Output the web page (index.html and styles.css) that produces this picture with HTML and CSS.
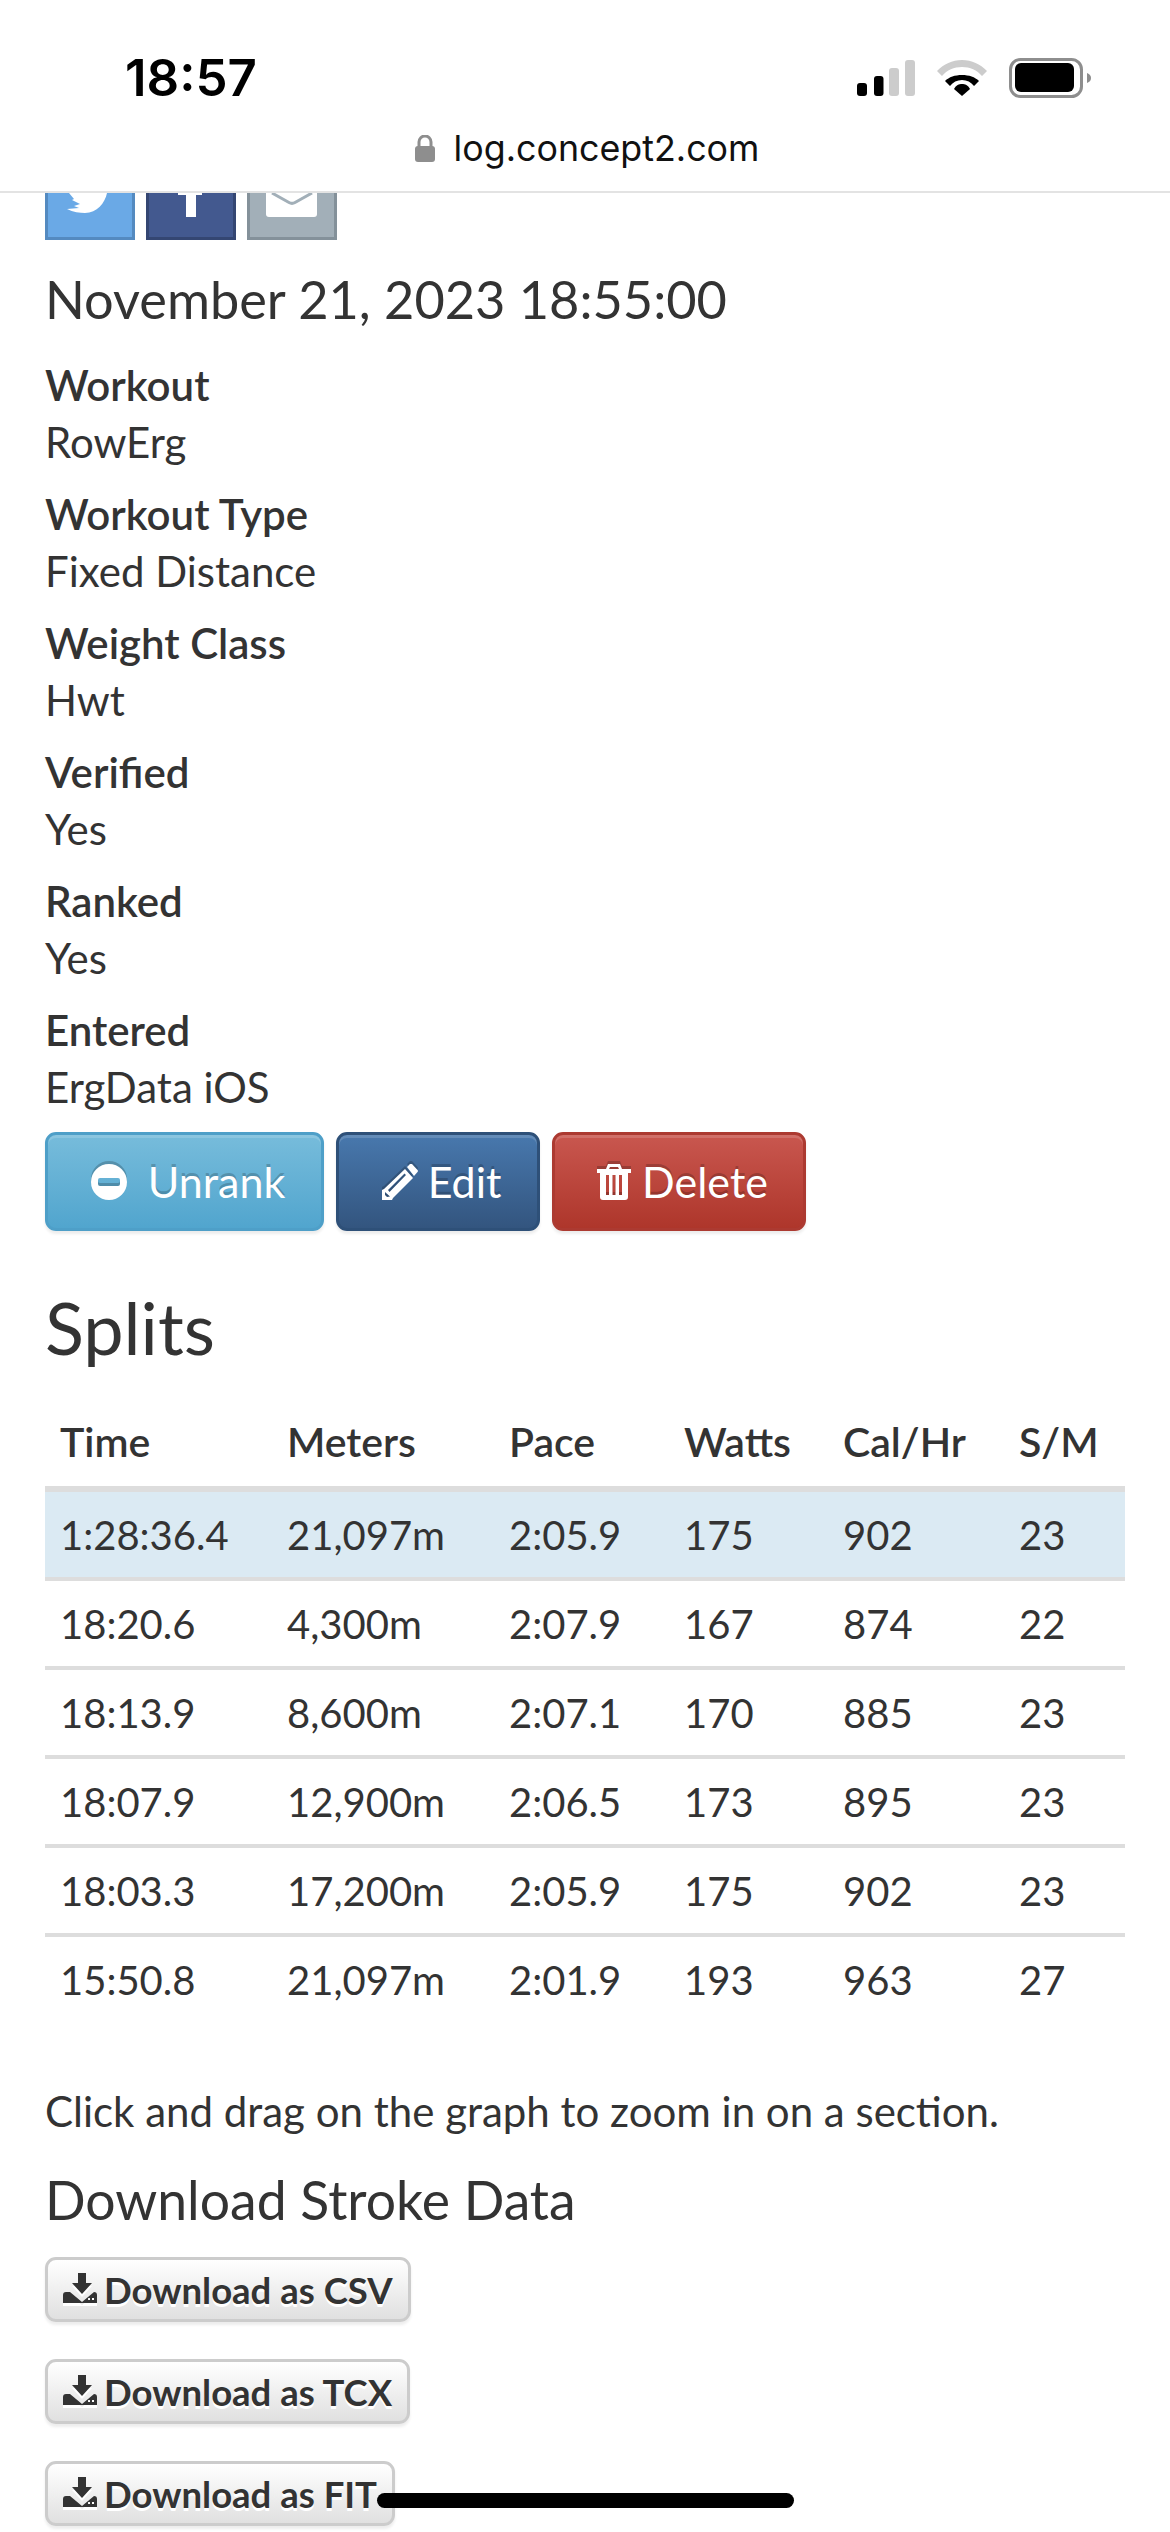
FILE: index.html
```html
<!DOCTYPE html>
<html lang="en">
<head>
<meta charset="utf-8">
<title>log.concept2.com</title>
<link rel="stylesheet" href="styles.css">
</head>
<body>
<header class="chrome">
  <div class="status">
    <span class="clock">18:57</span>
    <div class="status-icons">
      <svg class="signal" viewBox="0 0 58 36"><rect x="0" y="23" width="10" height="13" rx="3" fill="#000"/><rect x="17" y="16" width="9.500" height="20" rx="3" fill="#000"/><rect x="32" y="8" width="10" height="28" rx="3" fill="#ccc"/><rect x="48" y="0" width="10" height="36" rx="3" fill="#ccc"/></svg>
      <svg class="wifi" viewBox="0 0 50 37"><path d="M25 0C15 0 7 4 0 11l5 5c5-6 12-9 20-9s15 3 20 9l5-5C43 4 35 0 25 0z" fill="#ccc"/><path d="M25 15c-7 0-13 2-17 6l5 5c3-4 7-6 12-6s9 2 12 6l5-5c-4-4-10-6-17-6z" fill="#000"/><path d="M25 24c-3 0-6 1-8 5l8 7 8-7c-2-4-5-5-8-5z" fill="#000"/></svg>
      <svg class="battery" viewBox="0 0 82 40"><rect x="1.500" y="1.500" width="71" height="37" rx="10" fill="none" stroke="#8e8e8e" stroke-width="3"/><rect x="6" y="5" width="59" height="29" rx="6" fill="#000"/><path d="M78 15c3 1 4 3 4 5s-1 4-4 5z" fill="#8e8e8e"/></svg>
    </div>
  </div>
  <div class="address">
    <svg class="lock" viewBox="0 0 20 27"><path d="M4 12V7a6 6 0 0 1 12 0v5" fill="none" stroke="#8e8e8e" stroke-width="3"/><rect x="0" y="11" width="20" height="16" rx="3" fill="#8e8e8e"/></svg>
    <span>log.concept2.com</span>
  </div>
</header>

<main class="page">
  <div class="share">
    <a class="share-btn twitter"><svg viewBox="0 0 90 47"><path d="M24 0l5 6-2 1 8 4-6 2 5 2-12 1c6 3 13 4 18 4 12 0 20-10 22-20z" fill="#fff"/></svg></a>
    <a class="share-btn facebook"><svg viewBox="0 0 90 47"><path d="M32 0h24v2h-6v22H40V2h-8z" fill="#fff"/></svg></a>
    <a class="share-btn mail"><svg viewBox="0 0 90 47"><path d="M19 0h51v21a3 3 0 0 1-3 3H22a3 3 0 0 1-3-3z" fill="#fff"/><path d="M25 0l17 9.500a6 6 0 0 0 6 0L65 0" fill="none" stroke="#a2afb8" stroke-width="3"/></svg></a>
  </div>

  <h3 class="date">November 21, 2023 18:55:00</h3>

  <dl class="facts">
    <dt>Workout</dt><dd>RowErg</dd>
    <dt>Workout Type</dt><dd>Fixed Distance</dd>
    <dt>Weight Class</dt><dd>Hwt</dd>
    <dt>Verified</dt><dd>Yes</dd>
    <dt>Ranked</dt><dd>Yes</dd>
    <dt>Entered</dt><dd>ErgData iOS</dd>
  </dl>

  <div class="actions">
    <a class="btn btn-unrank">
      <svg class="icon-minus" viewBox="0 0 36 36"><path fill-rule="evenodd" d="M18 0a18 18 0 1 1 0 36 18 18 0 0 1 0-36zM9 14a2 2 0 0 0-2 2v4a2 2 0 0 0 2 2h18a2 2 0 0 0 2-2v-4a2 2 0 0 0-2-2z" fill="#fff"/></svg>
      <span>Unrank</span>
    </a>
    <a class="btn btn-edit">
      <svg class="icon-pencil" viewBox="0 0 36 36"><path d="M25 3l3-3a1.500 1.500 0 0 1 2 0l5.500 6a1.500 1.500 0 0 1 0 2L32 12z" fill="#fff"/><path fill-rule="evenodd" d="M23 5l8 9L11 34l-1 2H0V26l2-1zM6 26l1.500 2L24 11l-1.500-1.500zM3 28v3l2 2 3-.5z" fill="#fff"/></svg>
      <span>Edit</span>
    </a>
    <a class="btn btn-delete">
      <svg class="icon-trash" viewBox="0 0 34 36"><path fill-rule="evenodd" d="M11 0h12l2 5h9v4h-3v24a3 3 0 0 1-3 3H6a3 3 0 0 1-3-3V9H0V5h9zM13 3l-1 2h10l-1-2zM9 11v20h3V11zM15.500 11v20h3V11zM22 11v20h3V11z" fill="#fff"/></svg>
      <span>Delete</span>
    </a>
  </div>

  <h2 class="section-title">Splits</h2>

  <table class="splits">
    <thead>
      <tr><th class="c1">Time</th><th class="c2">Meters</th><th class="c3">Pace</th><th class="c4">Watts</th><th class="c5">Cal/Hr</th><th class="c6">S/M</th></tr>
    </thead>
    <tbody>
      <tr class="total"><td>1:28:36.4</td><td>21,097m</td><td>2:05.9</td><td>175</td><td>902</td><td>23</td></tr>
      <tr><td>18:20.6</td><td>4,300m</td><td>2:07.9</td><td>167</td><td>874</td><td>22</td></tr>
      <tr><td>18:13.9</td><td>8,600m</td><td>2:07.1</td><td>170</td><td>885</td><td>23</td></tr>
      <tr><td>18:07.9</td><td>12,900m</td><td>2:06.5</td><td>173</td><td>895</td><td>23</td></tr>
      <tr><td>18:03.3</td><td>17,200m</td><td>2:05.9</td><td>175</td><td>902</td><td>23</td></tr>
      <tr><td>15:50.8</td><td>21,097m</td><td>2:01.9</td><td>193</td><td>963</td><td>27</td></tr>
    </tbody>
  </table>

  <p class="hint">Click and drag on the graph to zoom in on a section.</p>
  <h3 class="download-title">Download Stroke Data</h3>

  <div class="downloads">
    <a class="dl-btn"><svg class="icon-dl" viewBox="0 0 34 30"><path fill-rule="evenodd" d="M15 0h8v10h6L19 21 9 10h6zM3 19h4l12 10 12-10h0a3 3 0 0 1 3 3v8H0v-8a3 3 0 0 1 3-3zM25 25v2h2v-2zM29 25v2h2v-2z" fill="#333"/></svg><span>Download as CSV</span></a>
    <a class="dl-btn"><svg class="icon-dl" viewBox="0 0 34 30"><path fill-rule="evenodd" d="M15 0h8v10h6L19 21 9 10h6zM3 19h4l12 10 12-10h0a3 3 0 0 1 3 3v8H0v-8a3 3 0 0 1 3-3zM25 25v2h2v-2zM29 25v2h2v-2z" fill="#333"/></svg><span>Download as TCX</span></a>
    <a class="dl-btn"><svg class="icon-dl" viewBox="0 0 34 30"><path fill-rule="evenodd" d="M15 0h8v10h6L19 21 9 10h6zM3 19h4l12 10 12-10h0a3 3 0 0 1 3 3v8H0v-8a3 3 0 0 1 3-3zM25 25v2h2v-2zM29 25v2h2v-2z" fill="#333"/></svg><span>Download as FIT</span></a>
  </div>
</main>
<div class="home-indicator"></div>
</body>
</html>
```
FILE: styles.css
```css
* { box-sizing: border-box; }
html, body { margin: 0; padding: 0; }
body {
  width: 1170px;
  height: 2532px;
  overflow: hidden;
  position: relative;
  background: #fff;
  color: #333;
  font-family: Lato, "Open Sans", sans-serif;
  font-size: 42px;
  line-height: 58px;
}
.chrome {
  height: 193px;
  background: #fff;
  border-bottom: 2px solid #e3e3e3;
  font-family: Inter, "Liberation Sans", sans-serif;
}
.status {
  height: 116px;
  padding: 53px 79px 0 125px;
  display: flex;
  justify-content: space-between;
  align-items: flex-start;
}
.clock { font-size: 51px; font-weight: 600; line-height: 50px; color: #000; }
.status-icons { display: flex; align-items: center; gap: 22px; padding-top: 5px; }
.signal { width: 58px; height: 36px; display: block; }
.wifi { width: 50px; height: 37px; display: block; }
.battery { width: 82px; height: 40px; display: block; }
.address {
  display: flex;
  justify-content: center;
  align-items: center;
  gap: 19px;
  height: 62px;
  padding: 2px 0 0 4px;
  font-size: 35.800px;
  line-height: 62px;
  color: #111;
}
.lock { width: 20px; height: 27px; display: block; }
.page { padding: 0 45px; }
.share { display: flex; gap: 11px; height: 47px; }
.share-btn { display: block; position: relative; width: 90px; height: 47px; overflow: hidden; }
.share-btn svg { display: block; width: 90px; height: 47px; margin-left: -3px; }
.twitter { background: #6aa9e6; border: 3px solid #548ac0; border-top: 0; }
.facebook { background: #43598f; border: 3px solid #344672; border-top: 0; }
.mail { background: #a2afb8; border: 3px solid #84919a; border-top: 0; }
.date { margin: 22px 0 0; font-size: 52.300px; line-height: 74px; font-weight: 400; }
.facts { margin: 20px 0 0; }
.facts dt { font-weight: 600; line-height: 58px; }
.facts dd { margin: -1px 0 14px; line-height: 58px; }
.actions { display: flex; gap: 12px; margin-top: 16px; }
.btn {
  display: flex;
  align-items: center;
  justify-content: center;
  height: 99px;
  padding-left: 7px;
  border: 3px solid;
  border-radius: 11px;
  color: #fff;
  font-size: 43px;
  text-shadow: 0 -3px 0 rgba(0, 0, 0, 0.2);
  box-shadow: inset 0 3px 0 rgba(255, 255, 255, 0.15), 0 3px 3px rgba(0, 0, 0, 0.075);
}
.btn svg { filter: drop-shadow(0 -3px 0 rgba(0, 0, 0, 0.2)); }
.btn-unrank { width: 279px; gap: 21px; background: linear-gradient(#77bcdb, #51a5ce); border-color: #4e9fc8; }
.btn-edit { width: 204px; gap: 10px; background: linear-gradient(#4878ad, #33557f); border-color: #2e5078; }
.btn-delete { width: 254px; gap: 11px; background: linear-gradient(#c9574f, #ae362b); border-color: #ac3a31; }
.icon-minus { width: 36px; height: 36px; }
.icon-pencil { width: 36px; height: 36px; }
.icon-trash { width: 34px; height: 36px; }
.section-title { margin: 50px 0 0; font-size: 72px; line-height: 92px; font-weight: 400; }
.splits {
  width: 1080px;
  margin-top: 25px;
  border-collapse: separate;
  border-spacing: 0;
  table-layout: fixed;
  font-size: 40px;
}
.splits th {
  height: 94px;
  padding: 0 15px;
  text-align: left;
  font-size: 41px;
  font-weight: 600;
  border-bottom: 6px solid #ddd;
}
.splits td {
  height: 89px;
  padding: 0 15px;
  border-bottom: 4px solid #ddd;
}
.splits tr:last-child td { border-bottom-color: transparent; }
.total td { background: #dbeaf3; }
.c1 { width: 227px; }
.c2 { width: 222px; }
.c3 { width: 175px; }
.c4 { width: 159px; }
.c5 { width: 176px; }
.c6 { width: 121px; }
.hint { margin: 56px 0 0; }
.download-title { margin: 29px 0 0; font-size: 53.500px; line-height: 60px; font-weight: 400; }
.downloads { display: flex; flex-direction: column; align-items: flex-start; gap: 37px; margin-top: 28px; }
.dl-btn {
  display: flex;
  align-items: center;
  gap: 7px;
  height: 65px;
  padding: 0 15px;
  border: 3px solid #ccc;
  border-radius: 11px;
  background: linear-gradient(#fff, #e0e0e0);
  box-shadow: 0 3px 3px rgba(0, 0, 0, 0.075);
  color: #333;
  font-size: 36.500px;
  font-weight: 700;
  text-shadow: 0 3px 0 #fff;
}
.icon-dl { width: 34px; height: 30px; margin-top: -4px; flex: none; filter: drop-shadow(0 3px 0 #fff); }
.home-indicator {
  position: absolute;
  left: 377px;
  top: 2493px;
  width: 417px;
  height: 15px;
  border-radius: 8px;
  background: #000;
}
```
